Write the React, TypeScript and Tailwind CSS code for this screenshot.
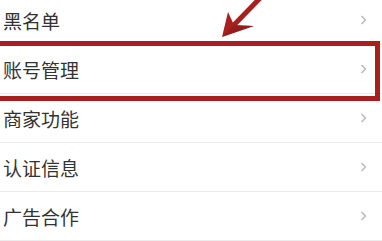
import React from 'react';

const items = ['黑名单', '账号管理', '商家功能', '认证信息', '广告合作'];

const Chevron: React.FC = () => (
  <svg width="7" height="10" viewBox="0 0 7 10" className="shrink-0">
    <path d="M1.5 1 L5.5 5 L1.5 9" fill="none" stroke="#b5b5b5" strokeWidth="1.3" />
  </svg>
);

const Row: React.FC<{ label: string }> = ({ label }) => (
  <div className="flex h-[49px] items-center justify-between border-b border-[#ececec] pl-[3px] pr-[15px]">
    <span className="text-[19px] leading-none text-[#333333]">{label}</span>
    <Chevron />
  </div>
);

export default function App() {
  return (
    <div
      className="relative h-[241px] w-[382px] overflow-hidden bg-white"
      style={{ fontFamily: '"Noto Sans CJK SC", "Noto Sans", sans-serif' }}
    >
      <div className="-mt-[4px] flex flex-col">
        {items.map((label) => (
          <Row key={label} label={label} />
        ))}
      </div>

      {/* annotation box around 账号管理 */}
      <div className="pointer-events-none absolute left-[-10px] top-[41px] h-[60px] w-[390px] border-[5px] border-[#a8201d]" />

      {/* annotation arrow */}
      <svg className="pointer-events-none absolute left-0 top-0" width="382" height="241" viewBox="0 0 382 241">
        <line x1="266" y1="-8" x2="232" y2="27" stroke="#a8201d" strokeWidth="5" />
        <polygon points="222,37 228,12 234,25 254,26" fill="#a8201d" />
        <polygon points="222,37 234,25 254,26" fill="#6e1a18" opacity="0.35" />
      </svg>
    </div>
  );
}
